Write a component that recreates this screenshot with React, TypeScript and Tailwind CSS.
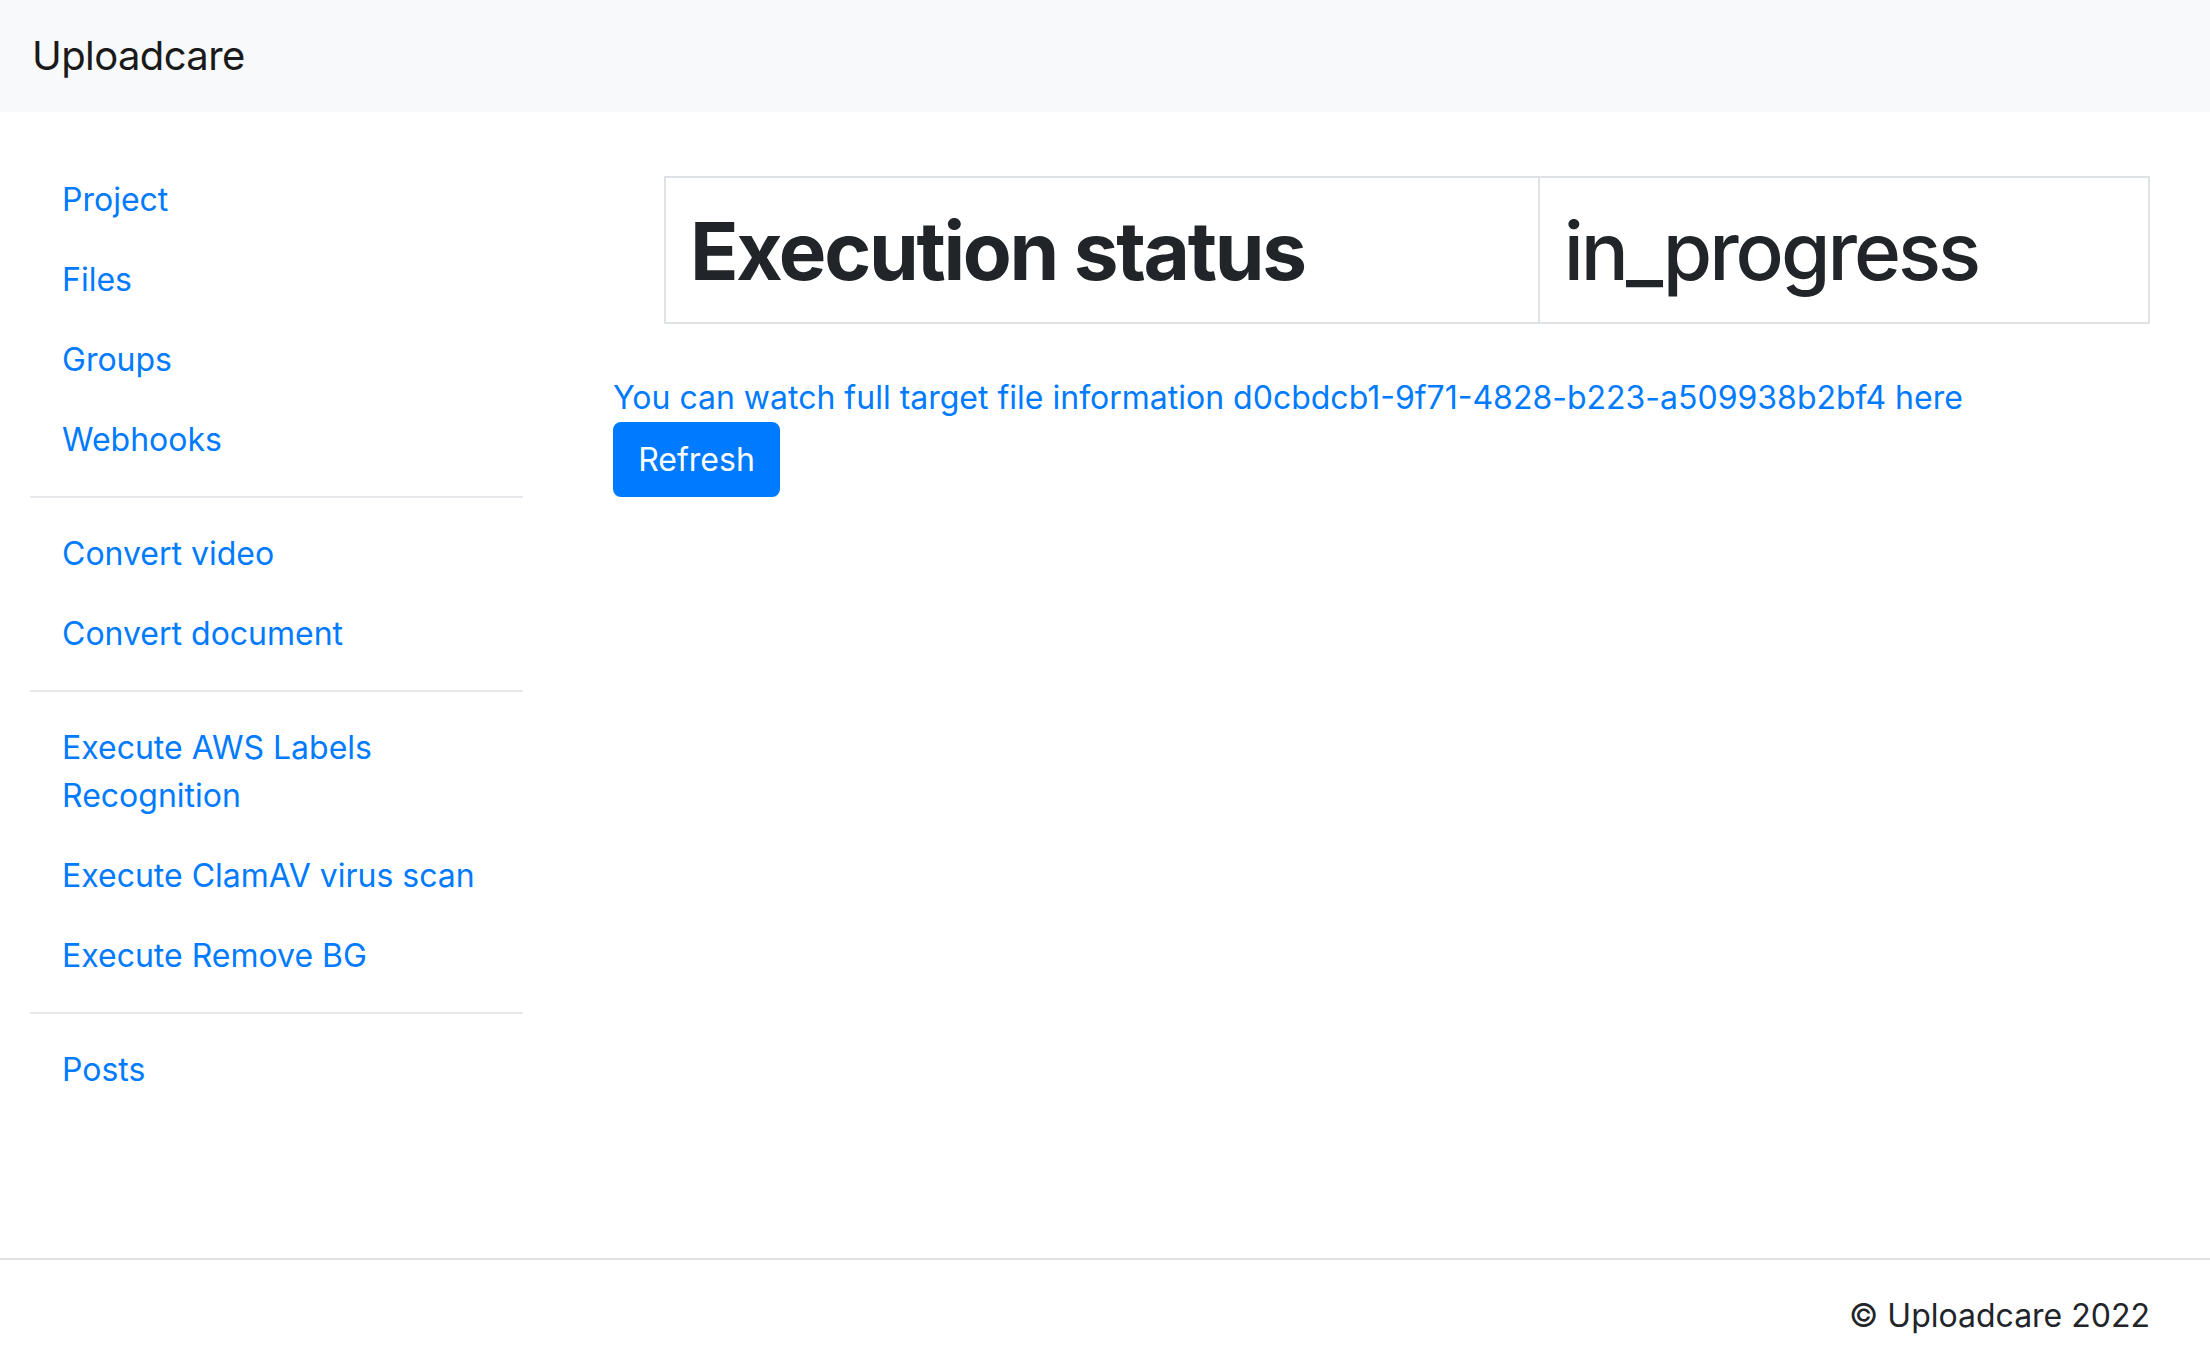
import React from "react";

const FONT = { fontFamily: "Inter, 'Noto Sans', 'Liberation Sans', sans-serif" };

type NavItem = { label: string };

const NAV_GROUPS: NavItem[][] = [
  [{ label: "Project" }, { label: "Files" }, { label: "Groups" }, { label: "Webhooks" }],
  [{ label: "Convert video" }, { label: "Convert document" }],
  [
    { label: "Execute AWS Labels Recognition" },
    { label: "Execute ClamAV virus scan" },
    { label: "Execute Remove BG" },
  ],
  [{ label: "Posts" }],
];

function Sidebar() {
  return (
    <nav className="w-[493px] shrink-0 flex flex-col">
      {NAV_GROUPS.map((group, gi) => (
        <div key={gi} className="flex flex-col">
          {gi > 0 && <div className="my-[16px] h-[2px] bg-[#e6e8eb]" />}
          {group.map((item) => (
            <a
              key={item.label}
              href="#"
              className="block px-[32px] py-[16px] text-[32px] leading-[48px] text-[#007bff]"
            >
              {item.label}
            </a>
          ))}
        </div>
      ))}
    </nav>
  );
}

export default function App() {
  return (
    <div className="min-h-screen flex flex-col bg-white text-[#212529]" style={FONT}>
      <header className="h-[112px] bg-[#f8f9fa] px-[32px] py-[16px] flex items-center">
        <a href="#" className="py-[10px] text-[40px] leading-[60px] tracking-[-0.6px] text-[#1a1a1a]">
          Uploadcare
        </a>
      </header>

      <main className="flex-1 flex px-[30px] pt-[48px]">
        <Sidebar />

        <section className="flex-1 ml-[90px] flex flex-col items-start">
          <table className="mt-[16px] ml-[51px] w-[1486px] border-collapse border-2 border-[#dee2e6]">
            <tbody>
              <tr>
                <th className="border-2 border-[#dee2e6] px-[24px] pt-[25px] pb-[23px] text-left align-top">
                  <h1 className="text-[80px] leading-[96px] font-bold tracking-[-2.3px]">Execution status</h1>
                </th>
                <td className="border-2 border-[#dee2e6] px-[24px] pt-[25px] pb-[23px] align-top">
                  <h1 className="text-[80px] leading-[96px] font-medium tracking-[-3px]">in_progress</h1>
                </td>
              </tr>
            </tbody>
          </table>

          <a href="#" className="mt-[49px] pt-[1px] text-[32px] leading-[48px] text-[#007bff]">
            You can watch full target file information d0cbdcb1-9f71-4828-b223-a509938b2bf4 here
          </a>
          <button className="w-[167px] h-[75px] rounded-[8px] border-2 border-[#007bff] bg-[#007bff] text-white text-[32px] leading-[48px]">
            Refresh
          </button>
        </section>
      </main>

      <footer className="border-t-2 border-[#dee2e6] px-[60px] py-[32px] flex justify-end">
        <span className="text-[32px] leading-[48px]">© Uploadcare 2022</span>
      </footer>
    </div>
  );
}
